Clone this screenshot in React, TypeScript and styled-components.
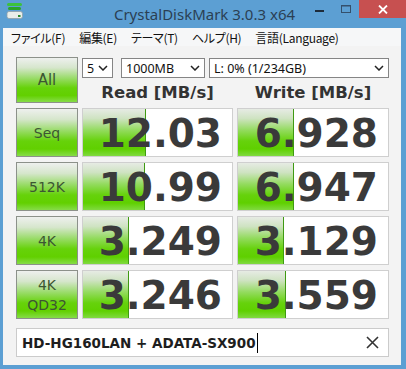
import React from 'react';
import styled, { createGlobalStyle } from 'styled-components';

const GlobalStyle = createGlobalStyle`
  html, body {
    margin: 0;
    padding: 0;
  }
  body {
    width: 406px;
    height: 369px;
    overflow: hidden;
    background: #5c9fd3;
  }
`;

const Window = styled.div`
  width: 406px;
  height: 369px;
  box-sizing: border-box;
  background: #5c9fd3;
  padding: 0 5px 4px 3px;
  display: flex;
  flex-direction: column;
`;

const TitleBar = styled.div`
  height: 28px;
  margin-right: -5px;
  display: grid;
  grid-template-columns: 1fr auto 1fr;
  align-items: start;
`;

const AppIcon = styled.div`
  padding: 2px 0 0 2px;
`;

const Title = styled.div`
  font-family: 'Noto Sans', 'Open Sans', sans-serif;
  font-size: 15px;
  line-height: 28px;
  color: #2b3f54;
  white-space: nowrap;
`;

const Controls = styled.div`
  justify-self: end;
  display: flex;
`;

const CaptionButton = styled.div<{ $width: number; $close?: boolean }>`
  width: ${(p) => p.$width}px;
  height: 18px;
  display: flex;
  align-items: center;
  justify-content: center;
  background: ${(p) => (p.$close ? '#c75050' : 'transparent')};
`;

const Client = styled.div`
  flex: 1;
  background: #f3f3f3;
  display: flex;
  flex-direction: column;
`;

const MenuBar = styled.div`
  height: 18px;
  display: flex;
  align-items: center;
  padding-left: 1px;
  background: #f6f7f8;
  font-family: 'Noto Sans CJK JP', 'Noto Sans', sans-serif;
  font-feature-settings: 'palt';
  font-size: 12px;
  letter-spacing: -0.3px;
  color: #111;
`;

const MenuItem = styled.span`
  padding: 0 7px;
  white-space: nowrap;
`;

const Main = styled.div`
  padding: 11px 12px 8px 13px;
  display: flex;
  flex-direction: column;
`;

const Grid = styled.div`
  display: grid;
  grid-template-columns: 62px 151px 152px;
  grid-template-rows: 46px repeat(4, 49px);
  column-gap: 4px;
  row-gap: 5px;
`;

const GreenButton = styled.div<{ $size?: number }>`
  box-sizing: border-box;
  border: 1px solid #8c918a;
  background: linear-gradient(
    to bottom,
    #eef0ee 0%,
    #d6e6cc 22%,
    #9bdc6c 45%,
    #66d20a 68%,
    #62d000 85%,
    #86dc48 100%
  );
  display: flex;
  flex-direction: column;
  align-items: center;
  justify-content: center;
  font-family: 'DejaVu Sans', sans-serif;
  font-size: ${(p) => p.$size ?? 14}px;
  line-height: 20px;
  color: #3c5632;
`;

const TopPanel = styled.div`
  grid-column: span 2;
  display: grid;
  grid-template-columns: 151px 152px;
  grid-template-rows: 21px 25px;
  column-gap: 4px;
`;

const SelectRow = styled.div`
  grid-column: span 2;
  padding-top: 1px;
  display: flex;
`;

const SelectBox = styled.div<{ $width: number; $gap: number }>`
  box-sizing: border-box;
  width: ${(p) => p.$width}px;
  margin-left: ${(p) => p.$gap}px;
  height: 20px;
  border: 1px solid #858585;
  background: #fff;
  display: flex;
  align-items: center;
  justify-content: space-between;
  padding: 0 4px 0 4px;
  font-family: 'Noto Sans', 'DejaVu Sans', sans-serif;
  font-size: 12.5px;
  color: #111;
`;

const Header = styled.div`
  align-self: end;
  text-align: center;
  font-family: 'DejaVu Sans', sans-serif;
  font-weight: bold;
  font-size: 16.5px;
  line-height: 20px;
  color: #333;
`;

const Cell = styled.div`
  position: relative;
  box-sizing: border-box;
  border: 1px solid #cfcfcf;
  background: #fff;
  display: flex;
  align-items: center;
  justify-content: flex-end;
  padding-right: 10px;
  overflow: hidden;
`;

const Fill = styled.div`
  position: absolute;
  left: 0;
  top: 0;
  bottom: 0;
  border-right: 1px solid #3f9a12;
  background: linear-gradient(
    to bottom,
    #e6ebe4 0%,
    #cfe3c2 20%,
    #93db5e 45%,
    #66d20c 68%,
    #5fd000 85%,
    #80da40 100%
  );
`;

const Value = styled.span`
  position: relative;
  font-family: 'DejaVu Sans', sans-serif;
  font-weight: bold;
  font-size: 39px;
  line-height: 1;
  color: #3a3a3a;
  padding-top: 2px;
`;

const Comment = styled.div`
  margin-top: 9px;
  height: 29px;
  box-sizing: border-box;
  border: 1px solid #cbcbcb;
  background: #fff;
  display: flex;
  align-items: center;
  padding: 0 9px 0 5px;
  font-family: 'DejaVu Sans', sans-serif;
  font-weight: bold;
  font-size: 13.5px;
  color: #1e1e1e;
`;

const Caret = styled.span`
  width: 1px;
  height: 20px;
  background: #000;
  margin-left: 1px;
`;

const Spacer = styled.span`
  flex: 1;
`;

const Chevron = () => (
  <svg width="10" height="6" viewBox="0 0 10 6">
    <path d="M1 1 L5 5 L9 1" fill="none" stroke="#222" strokeWidth="1.5" />
  </svg>
);

const results = [
  { label: ['Seq'], read: '12.03', write: '6.928' },
  { label: ['512K'], read: '10.99', write: '6.947' },
  { label: ['4K'], read: '3.249', write: '3.129' },
  { label: ['4K', 'QD32'], read: '3.246', write: '3.559' },
];

// CrystalDiskMark draws its meter on a log scale
const barWidth = (v: string) => {
  const n = parseFloat(v);
  return `${Math.max(0, Math.min(1, Math.log10(n * 10) / 5)) * 100}%`;
};

const ScoreCell: React.FC<{ value: string }> = ({ value }) => (
  <Cell>
    <Fill style={{ width: barWidth(value) }} />
    <Value>{value}</Value>
  </Cell>
);

const App: React.FC = () => {
  return (
    <>
      <GlobalStyle />
      <Window>
        <TitleBar>
          <AppIcon>
            <svg width="18" height="18" viewBox="0 0 18 18">
              <rect x="2" y="1" width="15" height="3" rx="1.5" fill="#3cc23c" />
              <rect x="3" y="5" width="13" height="3" rx="1.5" fill="#2aa52a" />
              <rect x="2" y="9.5" width="15.5" height="7" rx="2" fill="#e9eeea" stroke="#8fa0a8" strokeWidth="0.8" />
              <rect x="13" y="13" width="2.5" height="2" fill="#2c8a2c" />
            </svg>
          </AppIcon>
          <Title>CrystalDiskMark 3.0.3 x64</Title>
          <Controls>
            <CaptionButton $width={27}>
              <svg width="10" height="10" viewBox="0 0 10 10">
                <rect x="0" y="6" width="9" height="2" fill="#1d2b3a" />
              </svg>
            </CaptionButton>
            <CaptionButton $width={26}>
              <svg width="11" height="10" viewBox="0 0 11 10">
                <rect x="0.5" y="1.5" width="9" height="7" fill="none" stroke="#34506c" strokeWidth="1" />
                <rect x="0.5" y="1" width="9" height="1.5" fill="#34506c" />
              </svg>
            </CaptionButton>
            <CaptionButton $width={47} $close>
              <svg width="10" height="9" viewBox="0 0 10 9">
                <path d="M1 0.5 L9 8.5 M9 0.5 L1 8.5" stroke="#fff" strokeWidth="1.8" />
              </svg>
            </CaptionButton>
          </Controls>
        </TitleBar>

        <Client>
          <MenuBar>
            <MenuItem>ファイル(F)</MenuItem>
            <MenuItem>編集(E)</MenuItem>
            <MenuItem>テーマ(T)</MenuItem>
            <MenuItem>ヘルプ(H)</MenuItem>
            <MenuItem>言語(Language)</MenuItem>
          </MenuBar>

          <Main>
            <Grid>
              <GreenButton $size={15}>All</GreenButton>
              <TopPanel>
                <SelectRow>
                  <SelectBox $width={31} $gap={0}>
                    <span>5</span>
                    <Chevron />
                  </SelectBox>
                  <SelectBox $width={84} $gap={8}>
                    <span>1000MB</span>
                    <Chevron />
                  </SelectBox>
                  <SelectBox $width={180} $gap={4}>
                    <span>L: 0% (1/234GB)</span>
                    <Chevron />
                  </SelectBox>
                </SelectRow>
                <Header>Read [MB/s]</Header>
                <Header>Write [MB/s]</Header>
              </TopPanel>

              {results.map((r) => (
                <React.Fragment key={r.label.join(' ')}>
                  <GreenButton>
                    {r.label.map((line) => (
                      <span key={line}>{line}</span>
                    ))}
                  </GreenButton>
                  <ScoreCell value={r.read} />
                  <ScoreCell value={r.write} />
                </React.Fragment>
              ))}
            </Grid>

            <Comment>
              <span>HD-HG160LAN + ADATA-SX900</span>
              <Caret />
              <Spacer />
              <svg width="13" height="13" viewBox="0 0 13 13">
                <path d="M1 1 L12 12 M12 1 L1 12" stroke="#333" strokeWidth="1.6" />
              </svg>
            </Comment>
          </Main>
        </Client>
      </Window>
    </>
  );
};

export default App;
